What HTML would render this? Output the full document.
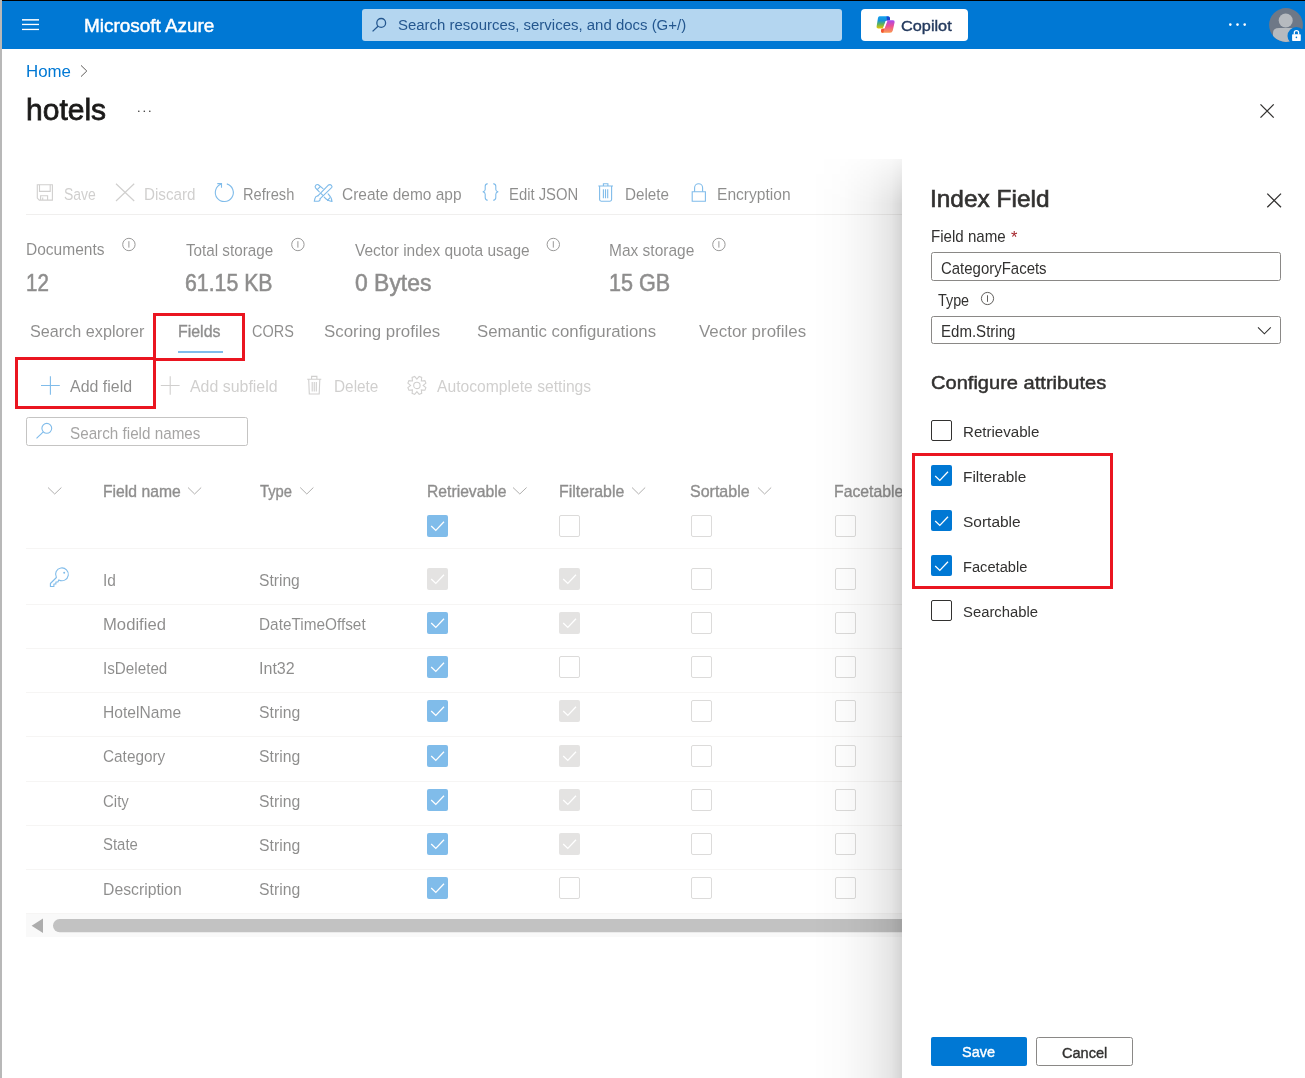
<!DOCTYPE html>
<html><head><meta charset="utf-8">
<style>
*{box-sizing:border-box}
html,body{margin:0;padding:0}
body{width:1305px;height:1078px;overflow:hidden;position:relative;background:#fff;font-family:"Liberation Sans",sans-serif}
.a{position:absolute}
.t{position:absolute;white-space:nowrap;transform-origin:0 0}
svg{position:absolute;overflow:visible}
.cb{position:absolute;width:21px;height:21px;border-radius:2px}
.cbe{border:1px solid #b8b6b4;background:#fff}
.cbc{background:#0078d4}
.cbd{background:#c8c6c4}
.hl{position:absolute;border:3px solid #ea1520}
.div{position:absolute;height:1px;background:#edebe9}
</style></head><body>
<!-- MAIN (left blade content, under overlay) -->
<div class="a" id="main" style="left:0;top:0;width:1305px;height:1078px">
  <!-- toolbar icons -->
  <svg style="left:0;top:0" width="1305" height="1078" viewBox="0 0 1305 1078">
    <!-- save floppy (disabled) -->
    <g fill="none" stroke="#a19f9d" stroke-width="1.1">
      <path d="M37.3 184.7 H52.4 V200.1 H39.3 L37.3 198.1 Z"/>
      <path d="M39.5 184.7 V191.4 H50.2 V184.7"/>
      <path d="M40.6 200.1 V195.8 H47.6 V200.1"/>
      <path d="M42.7 197.6 V200.1"/>
    </g>
    <!-- discard X (disabled) -->
    <g stroke="#a19f9d" stroke-width="1.2" fill="none"><path d="M116 183.7 L134.2 201 M134.2 183.7 L116 201"/></g>
    <!-- refresh -->
    <g fill="none" stroke="#0078d4" stroke-width="1.1">
      <path d="M226.8 183.9 A9 9 0 1 1 221.2 184.1"/>
      <path d="M217.3 183.6 H221.5 V187.8"/>
    </g>
    <!-- create demo app -->
    <g fill="none" stroke="#0078d4" stroke-width="1.15" stroke-linejoin="round" stroke-linecap="round">
      <path d="M317.9 195.8 L328.1 185.3 Q330 183.8 331.4 185.3 Q332.6 186.6 331.6 187.7 L320.2 198.6"/>
      <path d="M320.8 193.3 L322.7 195.2"/>
      <path d="M317.9 195.8 Q315.4 196.3 314.9 198.6 L314.3 201.3 L318.4 201.2 Q320.4 200.6 320.2 198.6"/>
      <path d="M319.3 191.8 L315.5 187.9 Q314.6 186.6 315.9 185.2 Q317.1 184 318.3 184.8 L323 188.6"/>
      <path d="M317.2 189.6 L320.2 186.6"/>
      <path d="M328.1 193.9 Q331.8 197.5 332 201.5 Q328 201.3 324.2 197.2"/>
      <path d="M327.5 200.3 L329.8 197.8"/>
    </g>
    <!-- {} -->
    <g fill="none" stroke="#0078d4" stroke-width="1.1">
      <path d="M487.6 183.6 Q485.2 184.1 485.2 186.3 V189.4 Q485.2 191.2 482.8 191.8 Q485.2 192.4 485.2 194.2 V197.6 Q485.2 199.9 487.6 200.4"/>
      <path d="M493.3 183.6 Q495.8 184.1 495.8 186.3 V189.4 Q495.8 191.2 498.2 191.8 Q495.8 192.4 495.8 194.2 V197.6 Q495.8 199.9 493.3 200.4"/>
    </g>
    <!-- trash toolbar -->
    <g fill="none" stroke="#0078d4" stroke-width="1.1">
      <path d="M598.3 186 H613 M603.4 186 V183.8 H607.9 V186"/>
      <path d="M599.6 186 V199.6 Q599.6 201.2 601.2 201.2 H610 Q611.6 201.2 611.6 199.6 V186"/>
      <path d="M603.4 189.2 V198.2 M605.5 189.2 V198.2 M607.7 189.2 V198.2"/>
    </g>
    <!-- lock toolbar -->
    <g fill="none" stroke="#0078d4" stroke-width="1.1">
      <path d="M692.2 191.8 H705.4 V201.2 H692.2 Z"/>
      <path d="M694.6 191.8 V187.8 A4 4 0 0 1 702.6 187.8 V191.8"/>
    </g>
    <!-- toolbar divider -->
    <rect x="26" y="214" width="876" height="1" fill="#e1dfdd"/>
    <!-- info icons -->
    <g fill="none" stroke="#323130" stroke-width="1">
      <circle cx="128.9" cy="244.5" r="6.2"/><path d="M128.9 241.2 V247.6"/>
      <circle cx="297.9" cy="244.5" r="6.2"/><path d="M297.9 241.2 V247.6"/>
      <circle cx="553.3" cy="244.5" r="6.2"/><path d="M553.3 241.2 V247.6"/>
      <circle cx="718.9" cy="244.5" r="6.2"/><path d="M718.9 241.2 V247.6"/>
    </g>
    <!-- tab underline -->
    <rect x="178" y="351" width="45" height="2" fill="#0078d4"/>
    <!-- add field plus -->
    <g stroke="#0078d4" stroke-width="1.1"><path d="M50.4 376.3 V394.8 M41 385.5 H59.8"/></g>
    <g stroke="#a19f9d" stroke-width="1.1"><path d="M170.2 376.3 V394.8 M160.8 385.5 H179.6"/></g>
    <!-- delete cmd trash -->
    <g fill="none" stroke="#a19f9d" stroke-width="1.1">
      <path d="M307.2 379.3 H321.3 M311.6 379.3 V376.4 H316.9 V379.3"/>
      <path d="M308.7 379.3 L309.3 394 H319.2 L319.8 379.3"/>
      <path d="M312.2 382 V391.5 M314.25 382 V391.5 M316.3 382 V391.5"/>
    </g>
    <!-- gear -->
    <g fill="none" stroke="#a19f9d" stroke-width="1.1" transform="translate(416.3 385.2)">
      <path transform="translate(-416.3 -385.2)" d="M423.20 385.40 L425.92 383.15 L424.87 380.61 L421.35 380.95 L421.69 377.43 L419.15 376.38 L416.90 379.10 L414.65 376.38 L412.11 377.43 L412.45 380.95 L408.93 380.61 L407.88 383.15 L410.60 385.40 L407.88 387.65 L408.93 390.19 L412.45 389.85 L412.11 393.37 L414.65 394.42 L416.90 391.70 L419.15 394.42 L421.69 393.37 L421.35 389.85 L424.87 390.19 L425.92 387.65 Z"/>
      <circle cx="0.6" cy="0.2" r="3.2"/>
    </g>
    <!-- search box -->
    <rect x="26.5" y="417.5" width="221" height="28" rx="2" fill="#fff" stroke="#8a8886" stroke-width="1"/>
    <g fill="none" stroke="#0078d4" stroke-width="1.1">
      <circle cx="46.8" cy="428.3" r="4.9"/><path d="M43.3 431.8 L36.5 438.4"/>
    </g>
    <!-- table header chevrons -->
    <g fill="none" stroke="#605e5c" stroke-width="1">
      <path d="M48 487.5 L54.7 494 L61.4 487.5"/>
      <path d="M188 487.5 L194.6 494 L201.2 487.5"/>
      <path d="M300.2 487.5 L306.8 494 L313.4 487.5"/>
      <path d="M513 487.5 L519.8 494 L526.6 487.5"/>
      <path d="M632 487.5 L638.6 494 L645.2 487.5"/>
      <path d="M758 487.5 L764.6 494 L771.2 487.5"/>
    </g>
    <!-- key icon -->
    <g fill="none" stroke="#0078d4" stroke-width="1.1" stroke-linejoin="round" transform="translate(0.3 0.9)">
      <path d="M56.1 576.6 A6.4 6.4 0 1 1 58.5 579 L57.6 581.1 H55.6 V583.1 H53.6 V585.6 H50.1 V582.6 Z"/>
    </g>
    <circle cx="64.2" cy="572.8" r="1" fill="#0078d4"/>
    <!-- dividers -->
    <g fill="#edebe9">
      <rect x="26" y="548" width="876" height="1"/>
      <rect x="26" y="604" width="876" height="1"/>
      <rect x="26" y="648" width="876" height="1"/>
      <rect x="26" y="692" width="876" height="1"/>
      <rect x="26" y="736" width="876" height="1"/>
      <rect x="26" y="781" width="876" height="1"/>
      <rect x="26" y="825" width="876" height="1"/>
      <rect x="26" y="869" width="876" height="1"/>
      <rect x="26" y="913" width="876" height="1"/>
    </g>
    <!-- scrollbar -->
    <rect x="26" y="914" width="876" height="23" fill="#f3f3f3"/>
    <path d="M31.6 925.7 L43 918.5 V933 Z" fill="#5a5a5a"/>
    <rect x="53" y="919" width="880" height="13.3" rx="6.6" fill="#858585"/>
  </svg>
  <div class="cb cbc" style="left:427px;top:515px;height:22px"><svg style="left:0;top:0" width="21" height="21" viewBox="0 0 21 21"><path d="M4.2 11 L8.8 15.4 L17 6.8" fill="none" stroke="#fff" stroke-width="1.3"/></svg></div>
<div class="cb cbe" style="left:559px;top:515px;height:22px"></div>
<div class="cb cbe" style="left:691px;top:515px;height:22px"></div>
<div class="cb cbe" style="left:835px;top:515px;height:22px"></div>
<div class="cb cbd" style="left:427px;top:568px;height:22px"><svg style="left:0;top:0" width="21" height="21" viewBox="0 0 21 21"><path d="M4.2 11 L8.8 15.4 L17 6.8" fill="none" stroke="#fff" stroke-width="1.3"/></svg></div>
<div class="cb cbd" style="left:559px;top:568px;height:22px"><svg style="left:0;top:0" width="21" height="21" viewBox="0 0 21 21"><path d="M4.2 11 L8.8 15.4 L17 6.8" fill="none" stroke="#fff" stroke-width="1.3"/></svg></div>
<div class="cb cbe" style="left:691px;top:568px;height:22px"></div>
<div class="cb cbe" style="left:835px;top:568px;height:22px"></div>
<div class="cb cbc" style="left:427px;top:612px;height:22px"><svg style="left:0;top:0" width="21" height="21" viewBox="0 0 21 21"><path d="M4.2 11 L8.8 15.4 L17 6.8" fill="none" stroke="#fff" stroke-width="1.3"/></svg></div>
<div class="cb cbd" style="left:559px;top:612px;height:22px"><svg style="left:0;top:0" width="21" height="21" viewBox="0 0 21 21"><path d="M4.2 11 L8.8 15.4 L17 6.8" fill="none" stroke="#fff" stroke-width="1.3"/></svg></div>
<div class="cb cbe" style="left:691px;top:612px;height:22px"></div>
<div class="cb cbe" style="left:835px;top:612px;height:22px"></div>
<div class="cb cbc" style="left:427px;top:656px;height:22px"><svg style="left:0;top:0" width="21" height="21" viewBox="0 0 21 21"><path d="M4.2 11 L8.8 15.4 L17 6.8" fill="none" stroke="#fff" stroke-width="1.3"/></svg></div>
<div class="cb cbe" style="left:559px;top:656px;height:22px"></div>
<div class="cb cbe" style="left:691px;top:656px;height:22px"></div>
<div class="cb cbe" style="left:835px;top:656px;height:22px"></div>
<div class="cb cbc" style="left:427px;top:700px;height:22px"><svg style="left:0;top:0" width="21" height="21" viewBox="0 0 21 21"><path d="M4.2 11 L8.8 15.4 L17 6.8" fill="none" stroke="#fff" stroke-width="1.3"/></svg></div>
<div class="cb cbd" style="left:559px;top:700px;height:22px"><svg style="left:0;top:0" width="21" height="21" viewBox="0 0 21 21"><path d="M4.2 11 L8.8 15.4 L17 6.8" fill="none" stroke="#fff" stroke-width="1.3"/></svg></div>
<div class="cb cbe" style="left:691px;top:700px;height:22px"></div>
<div class="cb cbe" style="left:835px;top:700px;height:22px"></div>
<div class="cb cbc" style="left:427px;top:745px;height:22px"><svg style="left:0;top:0" width="21" height="21" viewBox="0 0 21 21"><path d="M4.2 11 L8.8 15.4 L17 6.8" fill="none" stroke="#fff" stroke-width="1.3"/></svg></div>
<div class="cb cbd" style="left:559px;top:745px;height:22px"><svg style="left:0;top:0" width="21" height="21" viewBox="0 0 21 21"><path d="M4.2 11 L8.8 15.4 L17 6.8" fill="none" stroke="#fff" stroke-width="1.3"/></svg></div>
<div class="cb cbe" style="left:691px;top:745px;height:22px"></div>
<div class="cb cbe" style="left:835px;top:745px;height:22px"></div>
<div class="cb cbc" style="left:427px;top:789px;height:22px"><svg style="left:0;top:0" width="21" height="21" viewBox="0 0 21 21"><path d="M4.2 11 L8.8 15.4 L17 6.8" fill="none" stroke="#fff" stroke-width="1.3"/></svg></div>
<div class="cb cbd" style="left:559px;top:789px;height:22px"><svg style="left:0;top:0" width="21" height="21" viewBox="0 0 21 21"><path d="M4.2 11 L8.8 15.4 L17 6.8" fill="none" stroke="#fff" stroke-width="1.3"/></svg></div>
<div class="cb cbe" style="left:691px;top:789px;height:22px"></div>
<div class="cb cbe" style="left:835px;top:789px;height:22px"></div>
<div class="cb cbc" style="left:427px;top:833px;height:22px"><svg style="left:0;top:0" width="21" height="21" viewBox="0 0 21 21"><path d="M4.2 11 L8.8 15.4 L17 6.8" fill="none" stroke="#fff" stroke-width="1.3"/></svg></div>
<div class="cb cbd" style="left:559px;top:833px;height:22px"><svg style="left:0;top:0" width="21" height="21" viewBox="0 0 21 21"><path d="M4.2 11 L8.8 15.4 L17 6.8" fill="none" stroke="#fff" stroke-width="1.3"/></svg></div>
<div class="cb cbe" style="left:691px;top:833px;height:22px"></div>
<div class="cb cbe" style="left:835px;top:833px;height:22px"></div>
<div class="cb cbc" style="left:427px;top:877px;height:22px"><svg style="left:0;top:0" width="21" height="21" viewBox="0 0 21 21"><path d="M4.2 11 L8.8 15.4 L17 6.8" fill="none" stroke="#fff" stroke-width="1.3"/></svg></div>
<div class="cb cbe" style="left:559px;top:877px;height:22px"></div>
<div class="cb cbe" style="left:691px;top:877px;height:22px"></div>
<div class="cb cbe" style="left:835px;top:877px;height:22px"></div>
<div class="t" style="left:64.32px;top:186.95px;font-size:15.94px;line-height:15.94px;color:#a19f9d;transform:scaleX(0.8771)">Save</div>
<div class="t" style="left:144.25px;top:186.95px;font-size:15.94px;line-height:15.94px;color:#a19f9d;transform:scaleX(0.9538)">Discard</div>
<div class="t" style="left:243.38px;top:186.95px;font-size:15.94px;line-height:15.94px;color:#1b1a19;transform:scaleX(0.9204)">Refresh</div>
<div class="t" style="left:342.33px;top:187.45px;font-size:15.94px;line-height:15.94px;color:#1b1a19;transform:scaleX(0.9705)">Create demo app</div>
<div class="t" style="left:508.97px;top:186.95px;font-size:15.94px;line-height:15.94px;color:#1b1a19;transform:scaleX(0.9306)">Edit JSON</div>
<div class="t" style="left:625.24px;top:186.95px;font-size:15.94px;line-height:15.94px;color:#1b1a19;transform:scaleX(0.9556)">Delete</div>
<div class="t" style="left:717.22px;top:187.45px;font-size:15.94px;line-height:15.94px;color:#1b1a19;transform:scaleX(0.9784)">Encryption</div>
<div class="t" style="left:25.93px;top:242.15px;font-size:15.94px;line-height:15.94px;color:#1b1a19;transform:scaleX(0.9747)">Documents</div>
<div class="t" style="left:186.00px;top:242.65px;font-size:15.94px;line-height:15.94px;color:#1b1a19;transform:scaleX(0.9549)">Total storage</div>
<div class="t" style="left:354.70px;top:242.65px;font-size:15.94px;line-height:15.94px;color:#1b1a19;transform:scaleX(0.9709)">Vector index quota usage</div>
<div class="t" style="left:609.33px;top:242.65px;font-size:15.94px;line-height:15.94px;color:#1b1a19;transform:scaleX(0.9733)">Max storage</div>
<div class="t" style="left:26.02px;top:271.77px;font-size:23.33px;line-height:23.33px;font-weight:400;-webkit-text-stroke:0.58px #1b1a19;color:#1b1a19;transform:scaleX(0.8792)">12</div>
<div class="t" style="left:185.09px;top:271.77px;font-size:23.33px;line-height:23.33px;font-weight:400;-webkit-text-stroke:0.58px #1b1a19;color:#1b1a19;transform:scaleX(0.9117)">61.15 KB</div>
<div class="t" style="left:354.70px;top:272.27px;font-size:23.33px;line-height:23.33px;font-weight:400;-webkit-text-stroke:0.58px #1b1a19;color:#1b1a19;transform:scaleX(0.9821)">0 Bytes</div>
<div class="t" style="left:609.38px;top:271.77px;font-size:23.33px;line-height:23.33px;font-weight:400;-webkit-text-stroke:0.58px #1b1a19;color:#1b1a19;transform:scaleX(0.9250)">15 GB</div>
<div class="t" style="left:29.99px;top:322.52px;font-size:16.09px;line-height:16.09px;color:#1b1a19;transform:scaleX(1.0071)">Search explorer</div>
<div class="t" style="left:178.41px;top:322.52px;font-size:16.09px;line-height:16.09px;font-weight:400;-webkit-text-stroke:0.40px #1b1a19;color:#1b1a19;transform:scaleX(0.9905)">Fields</div>
<div class="t" style="left:251.70px;top:322.52px;font-size:16.09px;line-height:16.09px;color:#1b1a19;transform:scaleX(0.9000)">CORS</div>
<div class="t" style="left:323.65px;top:322.52px;font-size:16.09px;line-height:16.09px;color:#1b1a19;transform:scaleX(1.0486)">Scoring profiles</div>
<div class="t" style="left:476.86px;top:322.52px;font-size:16.09px;line-height:16.09px;color:#1b1a19;transform:scaleX(1.0435)">Semantic configurations</div>
<div class="t" style="left:698.60px;top:322.52px;font-size:16.09px;line-height:16.09px;color:#1b1a19;transform:scaleX(1.0515)">Vector profiles</div>
<div class="t" style="left:70.00px;top:377.78px;font-size:16.38px;line-height:16.38px;color:#1b1a19;transform:scaleX(0.9746)">Add field</div>
<div class="t" style="left:189.80px;top:377.78px;font-size:16.38px;line-height:16.38px;color:#a19f9d;transform:scaleX(0.9730)">Add subfield</div>
<div class="t" style="left:333.96px;top:377.78px;font-size:16.38px;line-height:16.38px;color:#a19f9d;transform:scaleX(0.9391)">Delete</div>
<div class="t" style="left:437.00px;top:377.78px;font-size:16.38px;line-height:16.38px;color:#a19f9d;transform:scaleX(0.9578)">Autocomplete settings</div>
<div class="t" style="left:69.66px;top:424.80px;font-size:16.23px;line-height:16.23px;color:#4a4847;transform:scaleX(0.9394)">Search field names</div>
<div class="t" style="left:102.82px;top:482.92px;font-size:16.09px;line-height:16.09px;font-weight:400;-webkit-text-stroke:0.40px #1b1a19;color:#1b1a19;transform:scaleX(0.9769)">Field name</div>
<div class="t" style="left:259.60px;top:483.42px;font-size:16.09px;line-height:16.09px;font-weight:400;-webkit-text-stroke:0.40px #1b1a19;color:#1b1a19;transform:scaleX(0.9200)">Type</div>
<div class="t" style="left:426.52px;top:482.92px;font-size:16.09px;line-height:16.09px;font-weight:400;-webkit-text-stroke:0.40px #1b1a19;color:#1b1a19;transform:scaleX(0.9763)">Retrievable</div>
<div class="t" style="left:558.71px;top:482.92px;font-size:16.09px;line-height:16.09px;font-weight:400;-webkit-text-stroke:0.40px #1b1a19;color:#1b1a19;transform:scaleX(0.9877)">Filterable</div>
<div class="t" style="left:690.01px;top:482.92px;font-size:16.09px;line-height:16.09px;font-weight:400;-webkit-text-stroke:0.40px #1b1a19;color:#1b1a19;transform:scaleX(0.9949)">Sortable</div>
<div class="t" style="left:834.02px;top:482.92px;font-size:16.09px;line-height:16.09px;font-weight:400;-webkit-text-stroke:0.40px #1b1a19;color:#1b1a19;transform:scaleX(0.9821)">Facetable</div>
<div class="t" style="left:102.63px;top:572.95px;font-size:15.94px;line-height:15.94px;color:#1b1a19;transform:scaleX(0.9709)">Id</div>
<div class="t" style="left:258.82px;top:573.45px;font-size:15.94px;line-height:15.94px;color:#1b1a19;transform:scaleX(0.9800)">String</div>
<div class="t" style="left:102.56px;top:615.62px;font-size:16.09px;line-height:16.09px;color:#1b1a19;transform:scaleX(1.0356)">Modified</div>
<div class="t" style="left:258.85px;top:615.62px;font-size:16.09px;line-height:16.09px;color:#1b1a19;transform:scaleX(0.9550)">DateTimeOffset</div>
<div class="t" style="left:102.66px;top:659.50px;font-size:16.23px;line-height:16.23px;color:#1b1a19;transform:scaleX(0.9388)">IsDeleted</div>
<div class="t" style="left:258.81px;top:659.50px;font-size:16.23px;line-height:16.23px;color:#1b1a19;transform:scaleX(0.9912)">Int32</div>
<div class="t" style="left:102.63px;top:703.72px;font-size:16.09px;line-height:16.09px;color:#1b1a19;transform:scaleX(0.9709)">HotelName</div>
<div class="t" style="left:258.82px;top:703.72px;font-size:16.09px;line-height:16.09px;color:#1b1a19;transform:scaleX(0.9800)">String</div>
<div class="t" style="left:102.65px;top:748.42px;font-size:16.09px;line-height:16.09px;color:#1b1a19;transform:scaleX(0.9547)">Category</div>
<div class="t" style="left:258.82px;top:748.42px;font-size:16.09px;line-height:16.09px;color:#1b1a19;transform:scaleX(0.9800)">String</div>
<div class="t" style="left:102.67px;top:792.52px;font-size:16.09px;line-height:16.09px;color:#1b1a19;transform:scaleX(0.9333)">City</div>
<div class="t" style="left:258.82px;top:792.52px;font-size:16.09px;line-height:16.09px;color:#1b1a19;transform:scaleX(0.9800)">String</div>
<div class="t" style="left:102.67px;top:836.22px;font-size:16.09px;line-height:16.09px;color:#1b1a19;transform:scaleX(0.9278)">State</div>
<div class="t" style="left:258.82px;top:837.22px;font-size:16.09px;line-height:16.09px;color:#1b1a19;transform:scaleX(0.9800)">String</div>
<div class="t" style="left:102.62px;top:881.32px;font-size:16.09px;line-height:16.09px;color:#1b1a19;transform:scaleX(0.9797)">Description</div>
<div class="t" style="left:258.82px;top:881.32px;font-size:16.09px;line-height:16.09px;color:#1b1a19;transform:scaleX(0.9800)">String</div>
</div>
<!-- overlay -->
<div class="a" style="left:2px;top:159px;width:900px;height:919px;background:rgba(255,255,255,0.5)"></div>
<!-- shadow -->
<div class="a" style="left:812px;top:159px;width:90px;height:919px;background:linear-gradient(to right,rgba(0,0,0,0),rgba(0,0,0,0.015) 35%,rgba(0,0,0,0.05) 65%,rgba(0,0,0,0.1) 88%,rgba(0,0,0,0.17));-webkit-mask-image:linear-gradient(to bottom,rgba(0,0,0,0.25),#000 45px)"></div>
<!-- panel -->
<div class="a" style="left:902px;top:49px;width:403px;height:1029px;background:#fff"></div>
<!-- TOP layer -->
<div class="a" id="top" style="left:0;top:0;width:1305px;height:1078px">
  <!-- borders -->
  <div class="a" style="left:0;top:0;width:1305px;height:1px;background:#000"></div>
  <div class="a" style="left:0;top:0;width:2px;height:1078px;background:#b8b8b8"></div>
  <!-- header -->
  <div class="a" style="left:2px;top:1px;width:1303px;height:48px;background:#0078d4"></div>
  <svg style="left:0;top:0" width="1305" height="60" viewBox="0 0 1305 60">
    <g fill="#fff"><rect x="22" y="19.1" width="17" height="1.5"/><rect x="22" y="23.8" width="17" height="1.3"/><rect x="22" y="28.8" width="17" height="1.3"/></g>
    <rect x="362" y="9" width="480" height="32" rx="3" fill="#b4d6f0"/>
    <g fill="none" stroke="#24578f" stroke-width="1.3">
      <circle cx="381.2" cy="22.9" r="4.4"/><path d="M378 26.2 L372.6 31.4"/>
    </g>
    <rect x="861" y="9" width="107" height="32" rx="4" fill="#fff"/>
    <!-- copilot logo -->
    <defs>
      <linearGradient id="cg1" x1="0" y1="0" x2="0" y2="1"><stop offset="0" stop-color="#13a0f0"/><stop offset="0.35" stop-color="#1592d8"/><stop offset="0.65" stop-color="#5fb35a"/><stop offset="1" stop-color="#e8c400"/></linearGradient>
      <linearGradient id="cg2" x1="0" y1="0" x2="0" y2="1"><stop offset="0" stop-color="#a548f0"/><stop offset="0.45" stop-color="#ea4f96"/><stop offset="1" stop-color="#fb9a50"/></linearGradient>
    </defs>
    <path d="M879.5 16.3 L888 16.3 Q889.8 16.3 890 18.2 L890 20.2 L887 20.4 Q886.2 20.5 885.9 21.3 L883.4 28.4 L878 28.4 Q876.2 28.4 876.6 26.6 L878 17.8 Q878.3 16.3 879.5 16.3 Z" fill="url(#cg1)"/>
    <path d="M886.5 16.6 L888.2 16.4 Q889.9 16.5 890 18.3 L890 20.2 L887 20.4 Z" fill="#1d45cf"/>
    <path d="M886.5 20.3 L893 20.3 Q894.9 20.3 894.6 22.2 L892.8 30.5 Q892.3 32.7 890 32.7 L882.5 32.7 Q880.7 32.7 881 30.8 L881.6 29 L884 28.6 Q884.6 28.5 884.8 27.8 L886.5 20.3 Z" fill="url(#cg2)"/>
    <path d="M881.3 29.2 L884.3 28.6 L883.3 32.7 L882.5 32.7 Q880.7 32.7 881 30.8 Z" fill="#f25530"/>
    <path d="M885.6 20.9 L887.4 20.9 L884.6 28.3 L882.9 28.3 Z" fill="#fff"/>
    <!-- dots -->
    <g fill="#fff"><circle cx="1230.3" cy="24.6" r="1.3"/><circle cx="1237.5" cy="24.6" r="1.3"/><circle cx="1244.7" cy="24.6" r="1.3"/></g>
    <!-- avatar -->
    <defs><clipPath id="avc"><circle cx="1286" cy="25" r="16.9"/></clipPath></defs>
    <circle cx="1286" cy="25" r="16.9" fill="#6e7887"/>
    <g clip-path="url(#avc)">
      <circle cx="1285.7" cy="20.5" r="7" fill="#b6babf"/>
      <path d="M1273 45 V33 Q1273 28 1279 28 H1292 Q1298.5 28 1298.5 33 V45 Z" fill="#b6babf"/>
    </g>
    <circle cx="1296.4" cy="36" r="8.9" fill="#0078d4"/>
    <path d="M1292.1 35 Q1292.1 34.3 1292.8 34.3 H1300.1 Q1300.8 34.3 1300.8 35 V40.3 Q1300.8 41 1300.1 41 H1292.8 Q1292.1 41 1292.1 40.3 Z" fill="#fff"/>
    <path d="M1294.3 34.5 V32.8 A2.15 2.15 0 0 1 1298.6 32.8 V34.5" fill="none" stroke="#fff" stroke-width="1.3"/>
    <circle cx="1296.4" cy="37.4" r="0.8" fill="#0078d4"/>
  </svg>
  <!-- breadcrumb chevron, dots, close -->
  <svg style="left:0;top:0" width="1305" height="160" viewBox="0 0 1305 160">
    <path d="M81 65.4 L86.8 71 L81 76.6" fill="none" stroke="#605e5c" stroke-width="1"/>
    <g fill="#323130"><circle cx="138.8" cy="111.3" r="0.8"/><circle cx="144.3" cy="111.3" r="0.8"/><circle cx="149.8" cy="111.3" r="0.8"/></g>
    <path d="M1260.5 104.4 L1273.7 117.6 M1273.7 104.4 L1260.5 117.6" fill="none" stroke="#323130" stroke-width="1.3"/>
  </svg>
  <!-- panel -->
  <svg style="left:0;top:0" width="1305" height="1078" viewBox="0 0 1305 1078">
    <path d="M1267.3 193.6 L1281 207.3 M1281 193.6 L1267.3 207.3" fill="none" stroke="#323130" stroke-width="1.3"/>
    <rect x="931.5" y="252.5" width="349" height="28" rx="2" fill="#fff" stroke="#8a8886" stroke-width="1"/>
    <rect x="931.5" y="316.5" width="349" height="27" rx="2" fill="#fff" stroke="#8a8886" stroke-width="1"/>
    <path d="M1258 327.4 L1264.4 333.8 L1270.8 327.4" fill="none" stroke="#323130" stroke-width="1.1"/>
    <circle cx="987.5" cy="298.5" r="6.1" fill="none" stroke="#605e5c" stroke-width="1"/>
    <path d="M987.5 295.3 V301.8" stroke="#605e5c" stroke-width="1"/>
    
    <rect x="931" y="1037" width="96" height="29" rx="2" fill="#0078d4"/>
    <rect x="1036.5" y="1037.5" width="96" height="28" rx="2" fill="#fff" stroke="#8a8886" stroke-width="1"/>
  </svg>
  <div class="cb" style="left:931px;top:419.5px;border:1px solid #323130;background:#fff"></div>
<div class="cb cbc" style="left:931px;top:464.5px"><svg style="left:0;top:0" width="21" height="21" viewBox="0 0 21 21"><path d="M4.2 11 L8.8 15.4 L17 6.8" fill="none" stroke="#fff" stroke-width="1.3"/></svg></div>
<div class="cb cbc" style="left:931px;top:509.5px"><svg style="left:0;top:0" width="21" height="21" viewBox="0 0 21 21"><path d="M4.2 11 L8.8 15.4 L17 6.8" fill="none" stroke="#fff" stroke-width="1.3"/></svg></div>
<div class="cb cbc" style="left:931px;top:554.5px"><svg style="left:0;top:0" width="21" height="21" viewBox="0 0 21 21"><path d="M4.2 11 L8.8 15.4 L17 6.8" fill="none" stroke="#fff" stroke-width="1.3"/></svg></div>
<div class="cb" style="left:931px;top:599.5px;border:1px solid #323130;background:#fff"></div>
<div class="hl" style="left:153px;top:312.5px;width:92px;height:48.5px"></div>
<div class="hl" style="left:15px;top:357px;width:141px;height:52px"></div>
<div class="hl" style="left:912px;top:453px;width:201px;height:136px"></div>
<div class="t" style="left:83.81px;top:15.74px;font-size:19.13px;line-height:19.13px;font-weight:400;-webkit-text-stroke:0.48px #ffffff;color:#ffffff;transform:scaleX(0.9900)">Microsoft Azure</div>
<div class="t" style="left:397.63px;top:16.72px;font-size:15.51px;line-height:15.51px;color:#24578f;transform:scaleX(0.9653)">Search resources, services, and docs (G+/)</div>
<div class="t" style="left:901.40px;top:17.74px;font-size:15.36px;line-height:15.36px;font-weight:400;-webkit-text-stroke:0.38px #243a5e;color:#243a5e;transform:scaleX(1.0604)">Copilot</div>
<div class="t" style="left:26.23px;top:63.02px;font-size:17.39px;line-height:17.39px;color:#0078d4;transform:scaleX(0.9711)">Home</div>
<div class="t" style="left:25.52px;top:95.05px;font-size:30.30px;line-height:30.30px;font-weight:400;-webkit-text-stroke:0.76px #1b1a19;color:#1b1a19;transform:scaleX(0.9910)">hotels</div>
<div class="t" style="left:930.03px;top:186.74px;font-size:24.78px;line-height:24.78px;font-weight:400;-webkit-text-stroke:0.62px #323130;color:#323130;transform:scaleX(0.9864)">Index Field</div>
<div class="t" style="left:930.80px;top:228.71px;font-size:16.81px;line-height:16.81px;color:#323130;transform:scaleX(0.9000)">Field name</div>
<div class="t" style="left:1010.80px;top:229.71px;font-size:16.81px;line-height:16.81px;color:#a4262c;transform:scaleX(0.9833)">*</div>
<div class="t" style="left:940.96px;top:260.55px;font-size:15.94px;line-height:15.94px;color:#323130;transform:scaleX(0.9387)">CategoryFacets</div>
<div class="t" style="left:937.90px;top:293.45px;font-size:15.94px;line-height:15.94px;color:#323130;transform:scaleX(0.9000)">Type</div>
<div class="t" style="left:941.44px;top:323.70px;font-size:15.65px;line-height:15.65px;color:#323130;transform:scaleX(0.9618)">Edm.String</div>
<div class="t" style="left:930.52px;top:373.93px;font-size:18.55px;line-height:18.55px;font-weight:400;-webkit-text-stroke:0.46px #323130;color:#323130;transform:scaleX(1.0832)">Configure attributes</div>
<div class="t" style="left:963.33px;top:424.42px;font-size:15.51px;line-height:15.51px;color:#323130;transform:scaleX(0.9740)">Retrievable</div>
<div class="t" style="left:963.31px;top:469.42px;font-size:15.51px;line-height:15.51px;color:#323130;transform:scaleX(0.9919)">Filterable</div>
<div class="t" style="left:963.30px;top:514.42px;font-size:15.51px;line-height:15.51px;color:#323130;transform:scaleX(0.9982)">Sortable</div>
<div class="t" style="left:963.36px;top:559.42px;font-size:15.51px;line-height:15.51px;color:#323130;transform:scaleX(0.9448)">Facetable</div>
<div class="t" style="left:963.34px;top:604.42px;font-size:15.51px;line-height:15.51px;color:#323130;transform:scaleX(0.9571)">Searchable</div>
<div class="t" style="left:962.06px;top:1044.12px;font-size:15.51px;line-height:15.51px;font-weight:400;-webkit-text-stroke:0.39px #ffffff;color:#ffffff;transform:scaleX(0.9353)">Save</div>
<div class="t" style="left:1061.90px;top:1044.62px;font-size:15.51px;line-height:15.51px;font-weight:400;-webkit-text-stroke:0.39px #323130;color:#323130;transform:scaleX(0.9396)">Cancel</div>
</div>
</body></html>
